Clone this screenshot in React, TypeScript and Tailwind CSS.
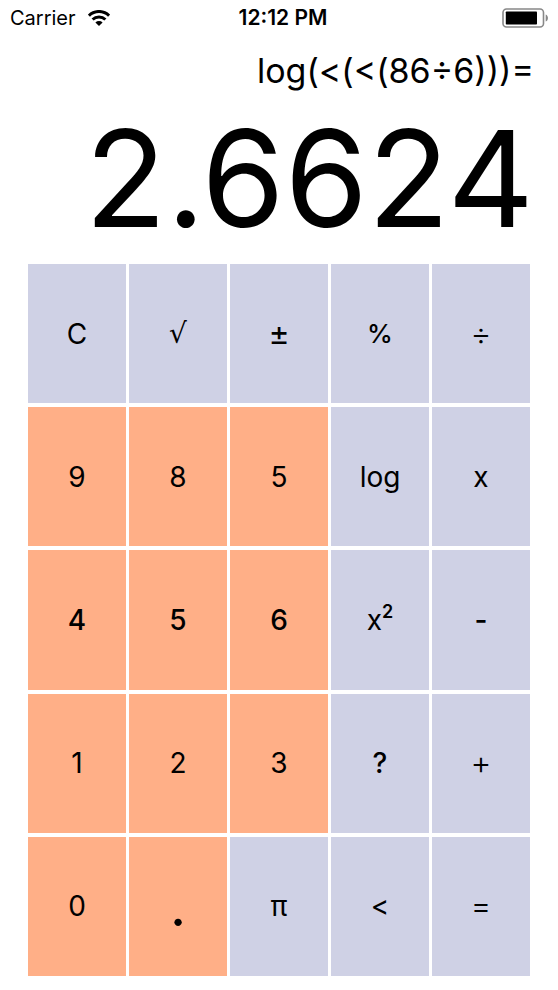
import React from "react";

type Key = { label: React.ReactNode; name: string; digit?: boolean; className?: string };

const regular = "text-[28px]";
const medium = "text-[28px] font-medium";
const operator = "text-[32px] font-light";

const keys: Key[] = [
  { label: "C", name: "Clear" },
  { label: "√", name: "Square root", className: "text-[28px] font-['DejaVu_Sans',sans-serif]" },
  { label: "±", name: "Toggle sign", className: "text-[32px]" },
  { label: "%", name: "Percent", className: "text-[26px] font-medium" },
  { label: "÷", name: "Divide", className: operator },
  { label: "9", name: "9", digit: true },
  { label: "8", name: "8", digit: true },
  { label: "5", name: "5", digit: true },
  { label: "log", name: "Logarithm" },
  { label: "x", name: "Multiply" },
  { label: "4", name: "4", digit: true, className: medium },
  { label: "5", name: "5", digit: true, className: medium },
  { label: "6", name: "6", digit: true, className: medium },
  {
    label: (
      <span>
        x<sup className="-top-3 text-lg leading-none font-semibold">2</sup>
      </span>
    ),
    name: "Square",
  },
  { label: "-", name: "Subtract", className: medium },
  { label: "1", name: "1", digit: true },
  { label: "2", name: "2", digit: true },
  { label: "3", name: "3", digit: true },
  { label: "?", name: "Random", className: medium },
  { label: "+", name: "Add", className: operator },
  { label: "0", name: "0", digit: true },
  { label: ".", name: "Decimal point", digit: true, className: "text-[56px]" },
  { label: "π", name: "Pi" },
  { label: "<", name: "Back" },
  { label: "=", name: "Equals", className: operator },
];

function WifiIcon() {
  return (
    <svg viewBox="0 0 22 16" className="h-4 w-[22px]" aria-hidden="true">
      <g fill="none" stroke="#000" strokeWidth="3">
        <path d="M0.9 5.6a14.4 14.4 0 0 1 20.2 0" />
        <path d="M4.6 9.5a9.2 9.2 0 0 1 12.8 0" />
      </g>
      <path d="M11 15.9l-3.6-3.5a5.2 5.2 0 0 1 7.2 0z" />
    </svg>
  );
}

function BatteryIcon() {
  return (
    <svg viewBox="0 0 48 20" className="h-5 w-12" aria-hidden="true">
      <rect x="1" y="1" width="40.5" height="18" rx="3.5" fill="none" stroke="#888" strokeWidth="1.6" />
      <rect x="3.8" y="3.5" width="31.2" height="13" rx="0.8" />
      <path d="M43.7 6.5c3 1 3 6 0 7z" fill="#888" />
    </svg>
  );
}

export default function App() {
  return (
    <main className="flex min-h-screen flex-col bg-white font-['Inter',sans-serif] text-black">
      <header className="grid h-9 grid-cols-3 items-center px-2 text-xl">
        <div className="flex items-center gap-3 pl-[2px]">
          <span>Carrier</span>
          <WifiIcon />
        </div>
        <time className="pl-2 text-center text-[21px] font-semibold whitespace-nowrap">12:12 PM</time>
        <div className="flex justify-end">
          <BatteryIcon />
        </div>
      </header>
      <section className="flex flex-col items-end px-6">
        <p className="h-[70px] text-[34px] leading-[70px] whitespace-nowrap">log(&lt;(&lt;(86÷6)))=</p>
        <output className="h-[158px] text-[134px] leading-[144px]">2.6624</output>
      </section>
      <section className="mx-7 mb-[14px] grid flex-1 auto-rows-fr grid-cols-5 gap-x-[3px] gap-y-1">
        {keys.map((key, i) => (
          <button
            key={i}
            type="button"
            aria-label={key.name}
            className={`flex items-center justify-center ${key.className ?? regular} ${key.digit ? "bg-[#ffaf87]" : "bg-[#cfd1e5]"}`}
          >
            {key.label}
          </button>
        ))}
      </section>
    </main>
  );
}
